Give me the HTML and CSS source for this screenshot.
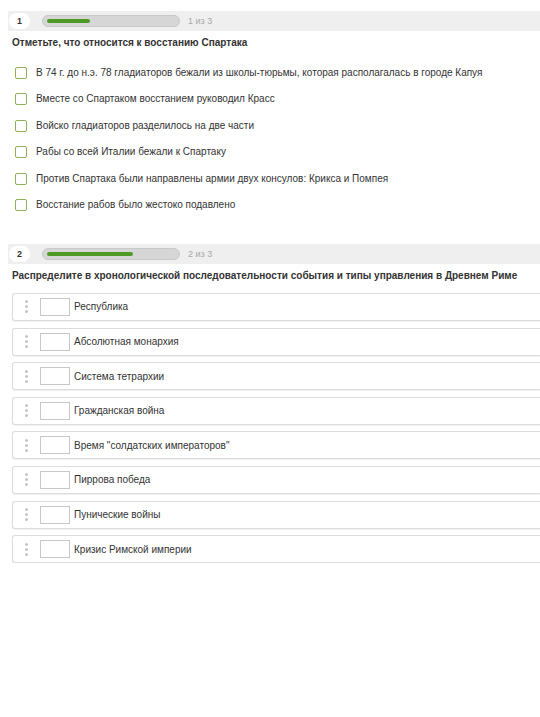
FILE: index.html
```html
<!DOCTYPE html>
<html lang="ru">
<head>
<meta charset="utf-8">
<link rel="stylesheet" href="styles.css">
</head>
<body>
<section class="question q1">
  <div class="qhead">
    <span class="num">1</span>
    <div class="track"><div class="fill" style="width:43px"></div></div>
    <span class="count">1 из 3</span>
  </div>
  <h2 class="qtitle">Отметьте, что относится к восстанию Спартака</h2>
  <ul class="options">
    <li><span class="check"></span>В 74 г. до н.э. 78 гладиаторов бежали из школы-тюрьмы, которая располагалась в городе Капуя</li>
    <li><span class="check"></span>Вместе со Спартаком восстанием руководил Красс</li>
    <li><span class="check"></span>Войско гладиаторов разделилось на две части</li>
    <li><span class="check"></span>Рабы со всей Италии бежали к Спартаку</li>
    <li><span class="check"></span>Против Спартака были направлены армии двух консулов: Крикса и Помпея</li>
    <li><span class="check"></span>Восстание рабов было жестоко подавлено</li>
  </ul>
</section>
<section class="question q2">
  <div class="qhead">
    <span class="num">2</span>
    <div class="track"><div class="fill" style="width:86px"></div></div>
    <span class="count">2 из 3</span>
  </div>
  <h2 class="qtitle">Распределите в хронологической последовательности события и типы управления в Древнем Риме</h2>
  <ul class="sortlist">
    <li><span class="handle"><i></i><i></i><i></i></span><span class="slot"></span>Республика</li>
    <li><span class="handle"><i></i><i></i><i></i></span><span class="slot"></span>Абсолютная монархия</li>
    <li><span class="handle"><i></i><i></i><i></i></span><span class="slot"></span>Система тетрархии</li>
    <li><span class="handle"><i></i><i></i><i></i></span><span class="slot"></span>Гражданская война</li>
    <li><span class="handle"><i></i><i></i><i></i></span><span class="slot"></span>Время "солдатских императоров"</li>
    <li><span class="handle"><i></i><i></i><i></i></span><span class="slot"></span>Пиррова победа</li>
    <li><span class="handle"><i></i><i></i><i></i></span><span class="slot"></span>Пунические войны</li>
    <li><span class="handle"><i></i><i></i><i></i></span><span class="slot"></span>Кризис Римской империи</li>
  </ul>
</section>
</body>
</html>
```

FILE: styles.css
```css
html { background: #fff; }
body {
  margin: 0;
  padding: 0 0 0 8px;
  font-family: "Liberation Sans", Arial, sans-serif;
  color: #333;
  font-size: 10px;
}
.question { display: flex; flex-direction: column; }
.q1 { padding-top: 11px; }
.q2 { padding-top: 33px; }
.qhead {
  height: 20px;
  background: #efefef;
  display: flex;
  align-items: center;
}
.num {
  width: 21px;
  height: 16px;
  margin-left: 1px;
  background: #fff;
  border-radius: 8px;
  font-weight: bold;
  font-size: 9px;
  line-height: 16px;
  padding-left: 8px;
  box-sizing: border-box;
  color: #333;
}
.track {
  margin-left: 12px;
  width: 138px;
  height: 12px;
  box-sizing: border-box;
  border: 1px solid #c9c9c9;
  background: #d6d6d6;
  border-radius: 6px;
  display: flex;
  align-items: center;
  padding-left: 4px;
}
.fill {
  height: 4px;
  background: #4f9a25;
  border-radius: 2px;
}
.count {
  margin-left: 8px;
  color: #a8a8a8;
  font-size: 9px;
}
.qtitle {
  margin: 6px 0 0 4px;
  font-size: 10px;
  line-height: 12px;
  font-weight: bold;
  color: #333;
}
.options {
  list-style: none;
  margin: 18px 0 0 0;
  padding: 0 0 0 7px;
  display: flex;
  flex-direction: column;
  gap: 14.4px;
}
.options li {
  display: flex;
  align-items: center;
  height: 12px;
  line-height: 12px;
}
.check {
  width: 12px;
  height: 12px;
  box-sizing: border-box;
  border: 1.5px solid #8cb157;
  border-radius: 2px;
  margin-right: 9px;
  flex: none;
}
.sortlist {
  list-style: none;
  margin: 11px 0 0 4px;
  padding: 0;
  display: flex;
  flex-direction: column;
  gap: 6.6px;
}
.sortlist li {
  height: 28px;
  box-sizing: border-box;
  border: 1px solid #dcdcdc;
  border-right: none;
  border-radius: 3px 0 0 3px;
  box-shadow: 0 1px 1px rgba(0,0,0,0.06);
  display: flex;
  align-items: center;
  padding-left: 12px;
}
.handle {
  display: flex;
  flex-direction: column;
  gap: 2px;
  width: 3px;
  margin-right: 12px;
}
.handle i {
  display: block;
  width: 3px;
  height: 3px;
  border-radius: 50%;
  background: #c4c4c4;
}
.slot {
  width: 30px;
  height: 18px;
  box-sizing: border-box;
  border: 1px solid #c8c8c8;
  background: #fff;
  margin-right: 4px;
}
```
